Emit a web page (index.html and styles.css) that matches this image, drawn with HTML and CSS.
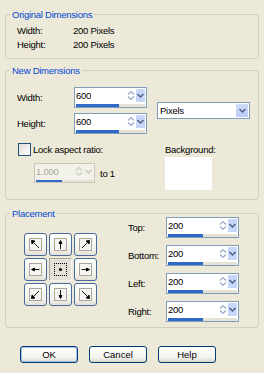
FILE: index.html
```html
<!DOCTYPE html>
<html>
<head>
<meta charset="utf-8">
<link rel="stylesheet" href="styles.css">
</head>
<body>
<div class="dialog">
  <fieldset class="group g1">
    <legend>Original Dimensions</legend>
    <div class="info">
      <span>Width:</span><span>200 Pixels</span>
      <span>Height:</span><span>200 Pixels</span>
    </div>
  </fieldset>

  <fieldset class="group g2">
    <legend>New Dimensions</legend>
    <div class="dims">
      <div class="dim-fields">
        <span>Width:</span>
        <div class="spin">
          <div class="spin-top"><span class="spin-val">600</span>
            <svg class="spin-ud" width="8" height="11" viewBox="0 0 8 11"><polyline points="1,4.5 4,1.5 7,4.5" /><polyline points="1,6.5 4,9.5 7,6.5" /></svg>
            <span class="spin-dd"><svg width="9" height="9" viewBox="0 0 9 9"><polyline points="1.5,3 4.5,6 7.5,3" /></svg></span>
          </div>
          <div class="spin-bar"><div class="spin-fill" style="width:62%"></div></div>
        </div>
        <span>Height:</span>
        <div class="spin">
          <div class="spin-top"><span class="spin-val">600</span>
            <svg class="spin-ud" width="8" height="11" viewBox="0 0 8 11"><polyline points="1,4.5 4,1.5 7,4.5" /><polyline points="1,6.5 4,9.5 7,6.5" /></svg>
            <span class="spin-dd"><svg width="9" height="9" viewBox="0 0 9 9"><polyline points="1.5,3 4.5,6 7.5,3" /></svg></span>
          </div>
          <div class="spin-bar"><div class="spin-fill" style="width:62%"></div></div>
        </div>
      </div>
      <div class="select">
        <span class="select-val">Pixels</span>
        <span class="select-btn"><svg width="9" height="9" viewBox="0 0 9 9"><polyline points="1.5,3 4.5,6 7.5,3" /></svg></span>
      </div>
    </div>
    <div class="aspect">
      <div class="aspect-left">
        <div class="check-row"><span class="checkbox"></span><span class="check-label">Lock aspect ratio:</span></div>
        <div class="ratio-row">
          <div class="spin disabled">
            <div class="spin-top"><span class="spin-val">1.000</span>
              <svg class="spin-ud" width="8" height="11" viewBox="0 0 8 11"><polyline points="1,4.5 4,1.5 7,4.5" /><polyline points="1,6.5 4,9.5 7,6.5" /></svg>
              <span class="spin-dd"><svg width="9" height="9" viewBox="0 0 9 9"><polyline points="1.5,3 4.5,6 7.5,3" /></svg></span>
            </div>
            <div class="spin-bar"><div class="spin-fill" style="width:45%"></div></div>
          </div>
          <span class="to">to 1</span>
        </div>
      </div>
      <div class="bg-col">
        <span class="bg-label">Background:</span>
        <div class="swatch"></div>
      </div>
    </div>
  </fieldset>

  <fieldset class="group g3">
    <legend>Placement</legend>
    <div class="placement">
      <div class="arrows">
        <div class="arr"><span class="ico"><svg width="11" height="11" viewBox="0 0 11 11"><line x1="9" y1="9" x2="2.5" y2="2.5"/><polygon points="1.5,1.5 5,2 2,5"/></svg></span></div>
        <div class="arr"><span class="ico"><svg width="11" height="11" viewBox="0 0 11 11"><line x1="5.5" y1="10" x2="5.5" y2="3"/><polygon points="5.5,1.5 4,4.5 7,4.5"/></svg></span></div>
        <div class="arr"><span class="ico"><svg width="11" height="11" viewBox="0 0 11 11"><line x1="2" y1="9" x2="8.5" y2="2.5"/><polygon points="9.5,1.5 6,2 9,5"/></svg></span></div>
        <div class="arr"><span class="ico"><svg width="11" height="11" viewBox="0 0 11 11"><line x1="9.5" y1="5.5" x2="3" y2="5.5"/><polygon points="1.5,5.5 4.5,4 4.5,7"/></svg></span></div>
        <div class="arr sel"><span class="ico"><svg width="11" height="11" viewBox="0 0 11 11"><circle cx="5.5" cy="5.5" r="1.6"/></svg></span></div>
        <div class="arr"><span class="ico"><svg width="11" height="11" viewBox="0 0 11 11"><line x1="1.5" y1="5.5" x2="8" y2="5.5"/><polygon points="9.5,5.5 6.5,4 6.5,7"/></svg></span></div>
        <div class="arr"><span class="ico"><svg width="11" height="11" viewBox="0 0 11 11"><line x1="9" y1="2" x2="2.5" y2="8.5"/><polygon points="1.5,9.5 2,6 5,9"/></svg></span></div>
        <div class="arr"><span class="ico"><svg width="11" height="11" viewBox="0 0 11 11"><line x1="5.5" y1="1" x2="5.5" y2="8"/><polygon points="5.5,9.5 4,6.5 7,6.5"/></svg></span></div>
        <div class="arr"><span class="ico"><svg width="11" height="11" viewBox="0 0 11 11"><line x1="2" y1="2" x2="8.5" y2="8.5"/><polygon points="9.5,9.5 9,6 6,9"/></svg></span></div>
      </div>
      <div class="margins">
        <span>Top:</span>
        <div class="spin">
          <div class="spin-top"><span class="spin-val">200</span>
            <svg class="spin-ud" width="8" height="11" viewBox="0 0 8 11"><polyline points="1,4.5 4,1.5 7,4.5" /><polyline points="1,6.5 4,9.5 7,6.5" /></svg>
            <span class="spin-dd"><svg width="9" height="9" viewBox="0 0 9 9"><polyline points="1.5,3 4.5,6 7.5,3" /></svg></span>
          </div>
          <div class="spin-bar"><div class="spin-fill" style="width:51%"></div></div>
        </div>
        <span>Bottom:</span>
        <div class="spin">
          <div class="spin-top"><span class="spin-val">200</span>
            <svg class="spin-ud" width="8" height="11" viewBox="0 0 8 11"><polyline points="1,4.5 4,1.5 7,4.5" /><polyline points="1,6.5 4,9.5 7,6.5" /></svg>
            <span class="spin-dd"><svg width="9" height="9" viewBox="0 0 9 9"><polyline points="1.5,3 4.5,6 7.5,3" /></svg></span>
          </div>
          <div class="spin-bar"><div class="spin-fill" style="width:51%"></div></div>
        </div>
        <span>Left:</span>
        <div class="spin">
          <div class="spin-top"><span class="spin-val">200</span>
            <svg class="spin-ud" width="8" height="11" viewBox="0 0 8 11"><polyline points="1,4.5 4,1.5 7,4.5" /><polyline points="1,6.5 4,9.5 7,6.5" /></svg>
            <span class="spin-dd"><svg width="9" height="9" viewBox="0 0 9 9"><polyline points="1.5,3 4.5,6 7.5,3" /></svg></span>
          </div>
          <div class="spin-bar"><div class="spin-fill" style="width:51%"></div></div>
        </div>
        <span>Right:</span>
        <div class="spin">
          <div class="spin-top"><span class="spin-val">200</span>
            <svg class="spin-ud" width="8" height="11" viewBox="0 0 8 11"><polyline points="1,4.5 4,1.5 7,4.5" /><polyline points="1,6.5 4,9.5 7,6.5" /></svg>
            <span class="spin-dd"><svg width="9" height="9" viewBox="0 0 9 9"><polyline points="1.5,3 4.5,6 7.5,3" /></svg></span>
          </div>
          <div class="spin-bar"><div class="spin-fill" style="width:51%"></div></div>
        </div>
      </div>
    </div>
  </fieldset>

  <div class="buttons">
    <button class="btn default">OK</button>
    <button class="btn">Cancel</button>
    <button class="btn">Help</button>
  </div>
</div>
</body>
</html>
```

FILE: styles.css
```css
* { box-sizing: border-box; }
html, body { margin: 0; padding: 0; }
body {
  width: 264px;
  height: 373px;
  overflow: hidden;
  background: #ECE9D8;
  font-family: "Liberation Sans", Arial, sans-serif;
  font-size: 9.5px;
  letter-spacing: -0.25px;
  color: #000;
}
.dialog { padding: 0 5px; }

.group {
  margin: 0;
  padding: 0;
  min-width: 0;
  border: 1px solid #D0D0BF;
  border-radius: 3px;
}
.group legend {
  margin-left: 4px;
  padding: 0 2px;
  height: 13px;
  line-height: 13px;
  color: #0046D5;
}
.g1 { margin-top: 8px; }
.g2 { margin-top: 5px; }
.g3 { margin-top: 7px; }

.info {
  display: grid;
  grid-template-columns: 56px auto;
  grid-auto-rows: 14px;
  line-height: 14px;
  padding: 3px 0 6px 11px;
}

.dims {
  display: flex;
  align-items: center;
  padding: 10px 0 0 11px;
}
.dim-fields {
  display: grid;
  grid-template-columns: 57px 73px;
  grid-template-rows: 21px 21px;
  row-gap: 5px;
  align-items: center;
}

.spin {
  height: 21px;
  border: 1px solid #7F9DB9;
  background: #fff;
  display: flex;
  flex-direction: column;
}
.spin-top {
  display: flex;
  align-items: center;
  height: 15px;
}
.spin-val { flex: 1; padding-left: 1px; line-height: 15px; }
.spin-ud { fill: none; stroke: #98A8C8; stroke-width: 1.2; margin-right: 1px; }
.spin-dd {
  width: 9px;
  height: 13px;
  margin-right: 1px;
  background: #C8D7F8;
  display: flex;
  align-items: center;
  justify-content: center;
}
.spin-dd svg, .select-btn svg { fill: none; stroke: #4D6185; stroke-width: 1.5; }
.spin-bar {
  height: 3px;
  margin: 1px 1px 0;
  background: #E4E1D5;
  display: flex;
}
.spin-fill { height: 100%; background: #3169C6; }

.spin.disabled { background: #F2F1EA; border-color: #C9C7BA; }
.spin.disabled .spin-val { color: #ACA899; }
.spin.disabled .spin-ud { stroke: #CFCDC4; }
.spin.disabled .spin-dd { background: transparent; }
.spin.disabled .spin-dd svg { stroke: #C9C7BA; }

.select {
  margin-left: 10px;
  width: 93px;
  height: 17px;
  border: 1px solid #7F9DB9;
  background: #fff;
  display: flex;
  align-items: center;
}
.select-val { flex: 1; padding-left: 2px; }
.select-btn {
  width: 12px;
  height: 13px;
  margin-right: 1px;
  background: linear-gradient(#CFDCFA, #B9CBF5);
  display: flex;
  align-items: center;
  justify-content: center;
}

.aspect {
  display: flex;
  margin-top: 9px;
  padding: 0 0 9px 11px;
}
.aspect-left { width: 148px; }
.check-row { display: flex; align-items: center; height: 13px; }
.checkbox {
  width: 13px;
  height: 13px;
  margin-left: 1px;
  border: 1px solid #1C5180;
  background: linear-gradient(135deg, #DCDCD7, #fff);
}
.check-label { margin-left: 2px; }
.ratio-row {
  display: flex;
  align-items: center;
  margin-top: 7px;
  padding-left: 17px;
}
.ratio-row .spin { width: 61px; height: 20px; }
.to { margin-left: 5px; }
.bg-col { display: flex; flex-direction: column; }
.bg-label { line-height: 13px; height: 13px; }
.swatch { margin-top: 1px; width: 47px; height: 33px; background: #fff; }

.placement {
  display: flex;
  align-items: center;
  margin-top: -3px;
  padding: 0 0 6px 18px;
}
.arrows {
  display: grid;
  grid-template-columns: repeat(3, 23px);
  grid-auto-rows: 23px;
  gap: 2px;
}
.arr {
  border: 1px solid #4A6A9E;
  border-radius: 3px;
  background: linear-gradient(#FDFDFB, #F2F1EB 75%, #E2E0D5);
  display: flex;
  align-items: center;
  justify-content: center;
}
.ico {
  width: 13px;
  height: 13px;
  border: 1px solid #A9A79B;
  background: #F6F5F1;
  display: block;
}
.ico svg { display: block; stroke: #000; stroke-width: 0.9; fill: #000; }
.arr.sel {
  border-radius: 0;
  border-color: #A9A79B #F6F5F1 #F6F5F1 #A9A79B;
  background: #E4E2D8;
}
.arr.sel .ico { border: 1px dotted #000; background: transparent; }
.arr.sel .ico svg { stroke: none; }

.margins {
  margin-left: 31px;
  display: grid;
  grid-template-columns: 38px 73px;
  grid-auto-rows: 20px;
  row-gap: 8px;
  align-items: center;
}

.buttons {
  display: flex;
  gap: 11px;
  margin-top: 18px;
  padding-left: 15px;
}
.btn {
  width: 58px;
  height: 17px;
  padding: 0;
  border: 1px solid #003C74;
  border-radius: 3px;
  background: linear-gradient(#FFFFFF, #F3F3EF 70%, #D8D4C9);
  font: inherit;
  color: #000;
}
.btn.default { box-shadow: inset 0 0 0 1px #A8BEEB; }
```
